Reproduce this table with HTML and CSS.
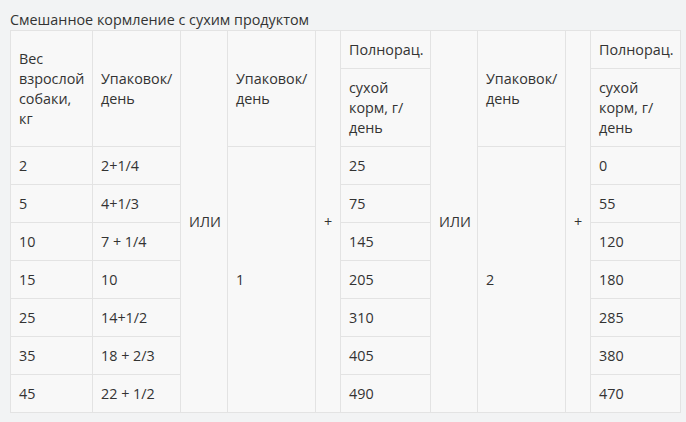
FILE: index.html
```html
<!DOCTYPE html>
<html lang="ru">
<head>
<meta charset="utf-8">
<link rel="stylesheet" href="styles.css">
</head>
<body>
<table class="feed">
  <caption>Смешанное кормление с сухим продуктом</caption>
  <colgroup>
    <col class="c-w"><col class="c-p"><col class="c-or"><col class="c-p"><col class="c-plus"><col class="c-g"><col class="c-or"><col class="c-p"><col class="c-plus"><col class="c-g">
  </colgroup>
  <tbody>
    <tr class="h1">
      <td rowspan="2">Вес взрослой собаки, кг</td>
      <td rowspan="2">Упаковок/ день</td>
      <td rowspan="9">ИЛИ</td>
      <td rowspan="2">Упаковок/ день</td>
      <td rowspan="9" class="plus">+</td>
      <td>Полнорац.</td>
      <td rowspan="9">ИЛИ</td>
      <td rowspan="2">Упаковок/ день</td>
      <td rowspan="9" class="plus">+</td>
      <td>Полнорац.</td>
    </tr>
    <tr class="h2">
      <td>сухой корм, г/ день</td>
      <td>сухой корм, г/ день</td>
    </tr>
    <tr><td>2</td><td>2+1/4</td><td rowspan="7">1</td><td>25</td><td rowspan="7">2</td><td>0</td></tr>
    <tr><td>5</td><td>4+1/3</td><td>75</td><td>55</td></tr>
    <tr><td>10</td><td>7 + 1/4</td><td>145</td><td>120</td></tr>
    <tr><td>15</td><td>10</td><td>205</td><td>180</td></tr>
    <tr><td>25</td><td>14+1/2</td><td>310</td><td>285</td></tr>
    <tr><td>35</td><td>18 + 2/3</td><td>405</td><td>380</td></tr>
    <tr><td>45</td><td>22 + 1/2</td><td>490</td><td>470</td></tr>
  </tbody>
</table>
</body>
</html>
```
FILE: styles.css
```css
html, body {
  margin: 0;
  background: #f2f3f4;
}
body {
  padding: 10px 0 0 10px;
  font-family: "Open Sans", "Liberation Sans", sans-serif;
  font-size: 14.35px;
  line-height: 20px;
  color: #333;
}
.feed {
  border-collapse: collapse;
  table-layout: fixed;
  width: 670px;
  background: #f8f8f8;
}
.feed caption {
  text-align: left;
  caption-side: top;
  line-height: 20px;
  padding: 0;
  background: #f2f3f4;
}
.c-w { width: 82px; }
.c-p { width: 88px; }
.c-or { width: 47px; }
.c-plus { width: 25px; }
.c-g { width: 90px; }
.feed td {
  border: 1px solid #e3e3e3;
  padding: 9px 8px 8px 8px;
  vertical-align: middle;
  text-align: left;
}
.feed td.plus {
  padding: 0;
  text-align: center;
}
```
